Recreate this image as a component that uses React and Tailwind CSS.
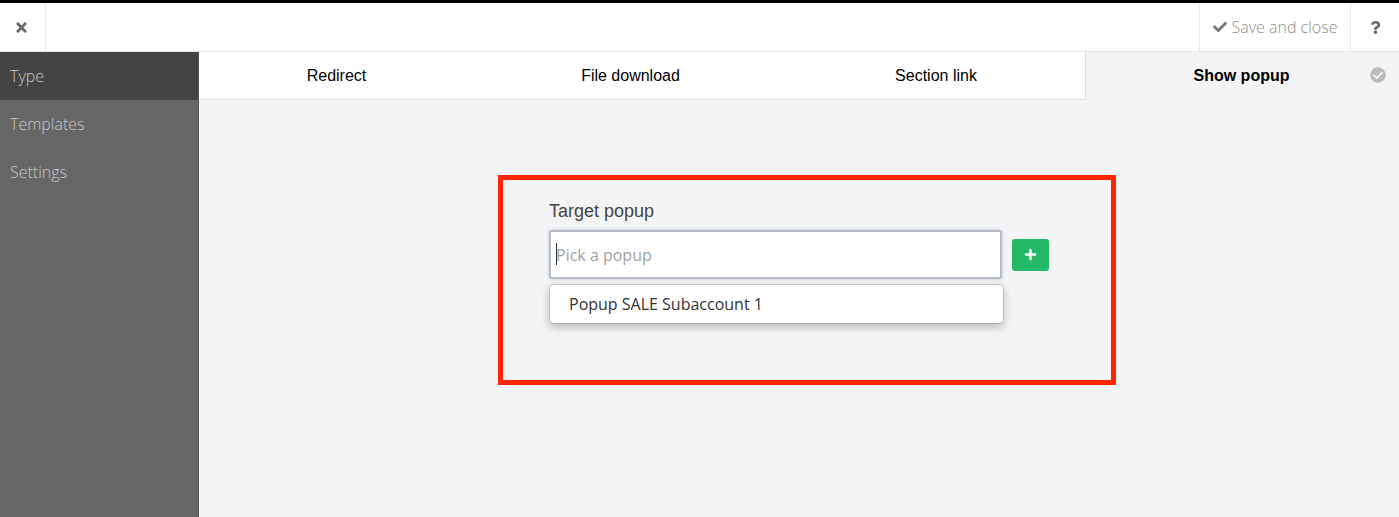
import React from 'react';
import { FaTimes, FaCheck, FaQuestion, FaPlus, FaCheckCircle } from 'react-icons/fa';

const OPEN = "font-['Open_Sans',sans-serif]";
const ARIAL = "font-['Liberation_Sans',Arial,sans-serif]";

function TopBar() {
  return (
    <div className="flex h-[49px] bg-white border-b border-[#e8e8e8] box-border">
      <button className="w-[46px] pr-[2px] flex items-center justify-center border-r border-[#e8e8e8] text-[#666]">
        <FaTimes className="text-[15px]" />
      </button>
      <div className="flex-1" />
      <button className={`w-[151px] flex items-center justify-center gap-[5px] border-l border-[#e8e8e8] text-[#8f8f8f] text-[16px] font-light ${OPEN}`}>
        <FaCheck className="text-[14px] text-[#777]" />
        Save and close
      </button>
      <button className="w-[49px] flex items-center justify-center border-l border-[#e8e8e8] text-[#666]">
        <FaQuestion className="text-[13px]" />
      </button>
    </div>
  );
}

function Sidebar() {
  const items = ['Type', 'Templates', 'Settings'];
  return (
    <div className={`w-[199px] shrink-0 bg-[#666] border-r border-[#555] box-border text-[16px] font-light text-[#c8c8c8] ${OPEN}`}>
      {items.map((item, i) => (
        <div key={item} className={`h-[48px] flex items-center pl-[10px] ${i === 0 ? 'bg-[#444]' : ''}`}>
          {item}
        </div>
      ))}
    </div>
  );
}

function Tabs() {
  return (
    <div className={`flex h-[48px] text-[16px] text-black ${ARIAL}`}>
      <div className="w-[275px] bg-white border-b border-[#e0e0e0] flex items-center justify-center">Redirect</div>
      <div className="w-[313px] bg-white border-b border-[#e0e0e0] flex items-center justify-center">File download</div>
      <div className="w-[299px] bg-white border-b border-[#e0e0e0] border-r flex items-center justify-center">Section link</div>
      <div className="relative flex-1 pr-[2px] flex items-center justify-center font-bold">
        Show popup
        <FaCheckCircle className="absolute right-[13px] top-[15px] text-[16px] text-[#bbb]" />
      </div>
    </div>
  );
}

function PopupPicker() {
  return (
    <div className="ml-[299px] mt-[75px] w-[618px] h-[210px] border-[5px] border-[#ff2600] box-border pl-[46px] pt-[21px]">
      <div className={`text-[18px] leading-[20px] text-[#444] ${ARIAL}`}>Target popup</div>
      <div className="flex items-center mt-[9px]">
        <div className={`relative w-[453px] h-[49px] bg-white rounded-[3px] border-2 border-[#b9bcc0] box-border shadow-[0_0_3px_rgba(120,160,220,0.6)] flex items-center pl-[5px] text-[16px] text-[#a0a0a0] ${OPEN}`}>
          <span className="absolute left-[5px] top-[11px] w-px h-[22px] bg-[#333]" />
          Pick a popup
        </div>
        <button className="ml-[10px] w-[37px] h-[32px] bg-[#22b866] rounded-[3px] flex items-center justify-center text-white">
          <FaPlus className="text-[13px]" />
        </button>
      </div>
      <div className={`mt-[5px] w-[455px] h-[40px] bg-white rounded-[5px] border border-[#c4c4c4] border-b-[#aaa] box-border shadow-[0_3px_8px_rgba(0,0,0,0.25)] flex items-center pl-[19px] text-[16px] text-[#333] ${OPEN}`}>
        Popup SALE Subaccount 1
      </div>
    </div>
  );
}

export default function App() {
  return (
    <div className="w-[1399px] h-[517px] overflow-hidden flex flex-col bg-[#f4f4f4]">
      <div className="h-[3px] bg-black shrink-0" />
      <TopBar />
      <div className="flex flex-1 min-h-0">
        <Sidebar />
        <div className="flex-1 min-w-0">
          <Tabs />
          <PopupPicker />
        </div>
      </div>
    </div>
  );
}
